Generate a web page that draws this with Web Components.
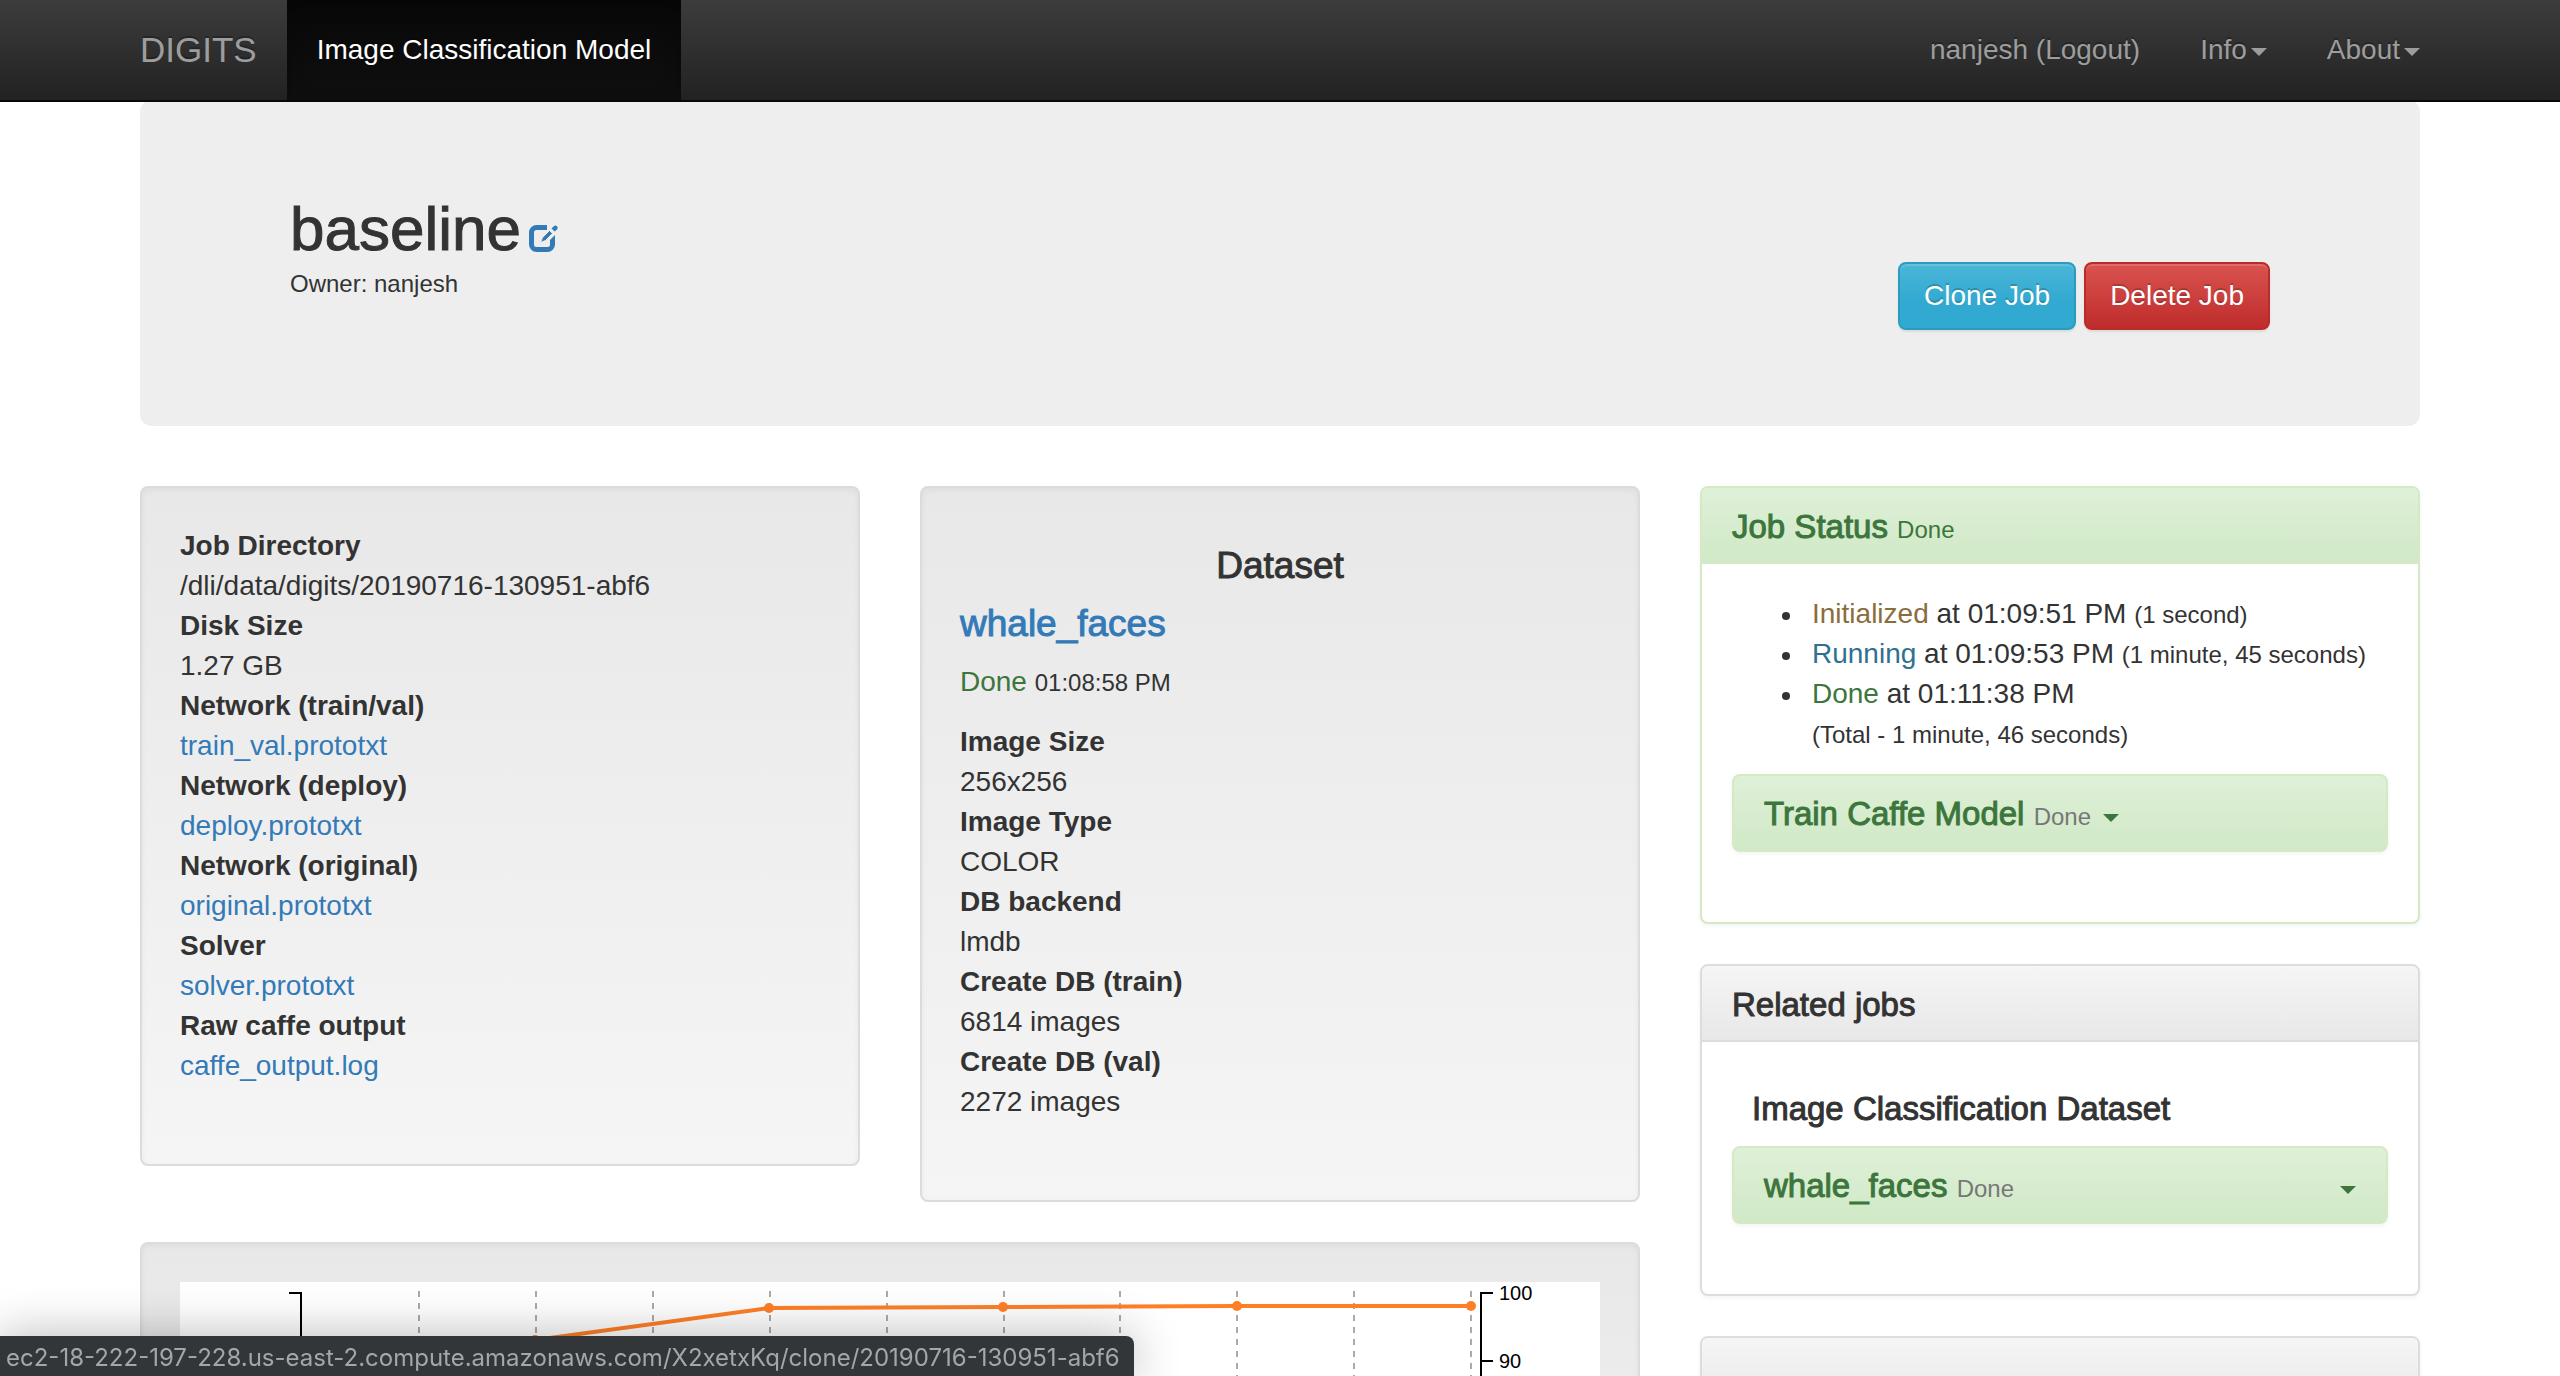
<!DOCTYPE html>
<html lang="en">
<head>
<meta charset="utf-8">
<title>baseline - DIGITS</title>
<style>
  html, body { margin: 0; height: 100%; }
  body {
    font: 28px/40px "Liberation Sans", Arial, sans-serif;
    color: #333; background: #fff; overflow: hidden;
  }
</style>
</head>
<body>
<digits-app></digits-app>
<link-status>ec2-18-222-197-228.us-east-2.compute.amazonaws.com/X2xetxKq/clone/20190716-130951-abf6</link-status>

<script>
const base = `
  *, *::before, *::after { box-sizing: border-box; }
  a { color: #337ab7; text-decoration: none; }
  small { font-size: 24px; font-weight: 400; line-height: 24px; -webkit-text-stroke: 0; }
  h1, h2, h3, h4 { margin: 0; font-weight: 400; -webkit-text-stroke: 1px currentColor; }
  button { font: inherit; color: inherit; margin: 0; cursor: pointer; }
`;

function define(name, css, html) {
  customElements.define(name, class extends HTMLElement {
    constructor() {
      super();
      this.attachShadow({ mode: 'open' }).innerHTML = `<style>${base}${css}</style>${html}`;
    }
  });
}

define('drop-caret', `
  :host { display: inline-block; vertical-align: middle; width: 16px; height: 8px; }
  svg { display: block; }
`, `<svg width="16" height="8" viewBox="0 0 16 8" aria-hidden="true"><path d="M0 0H16L8 8Z" fill="currentColor"/></svg>`);

define('nav-item', `
  :host { display: block; }
  a {
    display: flex; align-items: center; gap: 4px; height: 100px; padding: 0 30px;
    color: #9d9d9d; text-shadow: 0 -2px 0 rgba(0,0,0,.25);
  }
  drop-caret, ::slotted(drop-caret) { margin-top: 4px; }
  :host([active]) a {
    color: #fff; background: linear-gradient(#080808, #0f0f0f);
    box-shadow: inset 0 6px 18px rgba(0,0,0,.25);
  }
`, `<a href="#"><slot></slot></a>`);

define('nav-bar', `
  :host {
    display: block; position: relative; z-index: 2; margin-bottom: -2px;
    background: linear-gradient(#3c3c3c, #222); border-bottom: 2px solid #080808;
  }
  nav { display: flex; align-items: center; padding: 0 110px 0 140px; white-space: nowrap; }
  .brand { padding-right: 30px; font-size: 35px; color: #9d9d9d; text-shadow: 0 -2px 0 rgba(0,0,0,.25); }
  .right { display: flex; margin-left: auto; }
`, `
  <nav>
    <a class="brand" href="#">DIGITS</a>
    <nav-item active>Image Classification Model</nav-item>
    <div class="right">
      <nav-item>nanjesh (Logout)</nav-item>
      <nav-item>Info<drop-caret></drop-caret></nav-item>
      <nav-item>About<drop-caret></drop-caret></nav-item>
    </div>
  </nav>`);

define('action-button', `
  :host { display: block; }
  button {
    display: block; height: 68px; padding: 0 24px; border: 2px solid #2b9cc0; border-radius: 8px;
    color: #fff; text-shadow: 0 -2px 0 rgba(0,0,0,.2);
    background: linear-gradient(#4ab6d8, #31a9d0 60%);
    box-shadow: inset 0 2px 0 rgba(255,255,255,.15), 0 2px 2px rgba(0,0,0,.075);
  }
  :host([danger]) button { background: linear-gradient(#d9534f, #bf2c2c); border-color: #b92c28; }
`, `<button type="button"><slot></slot></button>`);

define('job-header', `
  :host {
    display: flex; align-items: flex-end; justify-content: space-between;
    padding: 96px 150px; background: #eee; border-radius: 12px;
  }
  .title { padding-bottom: 24px; }
  .name { display: flex; align-items: flex-end; gap: 8px; }
  h1 { font-size: 62px; line-height: 66px; }
  .name a { display: block; padding-bottom: 10px; }
  svg { display: block; }
  small { display: block; line-height: 44px; }
  .actions { display: flex; gap: 8px; }
`, `
  <div class="title">
    <div class="name">
      <h1>baseline</h1>
      <a href="#" aria-label="Edit name">
        <svg width="29" height="28" viewBox="0 0 29 28" fill="none">
          <path d="M18 3.500H7.500A5 5 0 0 0 2.500 8.500V20.500A5 5 0 0 0 7.500 25.500H18.500A5 5 0 0 0 23.500 20.500V17" stroke="#337ab7" stroke-width="5"/>
          <path d="M26 11V18H21V16Z" fill="#337ab7"/>
          <path d="M11.500 18.500L13.500 13.500L20.500 6.500L23.500 9.500L16.500 16.500Z" fill="#337ab7" stroke="#eee" stroke-width="1"/>
          <path d="M22.500 4.500L24.500 2.500Q26.300.700 28 2.200Q29.500 4 27.700 5.700L25.700 7.600Z" fill="#337ab7"/>
        </svg>
      </a>
    </div>
    <small>Owner: nanjesh</small>
  </div>
  <div class="actions">
    <action-button>Clone Job</action-button>
    <action-button danger>Delete Job</action-button>
  </div>`);

define('info-well', `
  :host {
    display: block; padding: 38px; border: 2px solid #dcdcdc; border-radius: 8px;
    background: linear-gradient(#e8e8e8, #f5f5f5);
    box-shadow: inset 0 2px 6px rgba(0,0,0,.05), 0 2px 0 rgba(255,255,255,.1);
  }
`, `<slot></slot>`);

/* Definition list built from "term|value" rows; a third field marks the value as a link. */
customElements.define('fact-list', class extends HTMLElement {
  connectedCallback() {
    const rows = this.getAttribute('rows').split(';').map(r => r.split('|'));
    this.attachShadow({ mode: 'open' }).innerHTML = `<style>${base}
      :host { display: block; margin-bottom: 40px; }
      dl, dd { margin: 0; } dt { font-weight: 700; }
    </style><dl>${rows.map(([t, v, link]) =>
      `<dt>${t}</dt><dd>${link ? `<a href="#">${v}</a>` : v}</dd>`).join('')}</dl>`;
  }
});

define('status-panel', `
  :host {
    --edge: #ddd; --from: #f5f5f5; --to: #e8e8e8; --title: #333;
    display: block; border: 2px solid var(--edge); border-radius: 8px; background: #fff;
    box-shadow: 0 2px 4px rgba(0,0,0,.05);
  }
  :host([done]) { --edge: #d6e9c6; --from: #dff0d8; --to: #d0e9c6; --title: #3c763d; }
  header {
    height: 76px; padding: 21px 30px 0; border-bottom: 2px solid var(--edge); border-radius: 6px 6px 0 0;
    background: linear-gradient(var(--from), var(--to));
  }
  h3 { font-size: 33px; line-height: 36px; color: var(--title); }
  .body { padding: 30px 30px 70px; }
`, `<header><h3><slot name="title"></slot></h3></header><div class="body"><slot></slot></div>`);

define('task-bar', `
  :host { display: block; }
  button {
    display: flex; align-items: center; gap: 12px; width: 100%; height: 78px; padding: 2px 30px 0;
    border: 2px solid #d6e9c6; border-radius: 8px; color: #3c763d; text-align: left;
    background: linear-gradient(#dff0d8, #d0e9c6); box-shadow: 0 2px 4px rgba(0,0,0,.05);
    font-size: 33px; line-height: 36px;
  }
  h4 { font-size: inherit; }
  small { color: #777; }
  drop-caret { margin-top: 8px; }
  :host([spread]) button { justify-content: space-between; }
`, `<button type="button"><h4><slot></slot> <small>Done</small></h4><drop-caret></drop-caret></button>`);

const gridX = Array.from({ length: 10 }, (_, i) => 239 + Math.round(i * 116.9));
define('accuracy-chart', `
  :host { display: block; background: #fff; }
  svg { display: block; width: 100%; height: auto; }
  text { font-size: 20px; fill: #000; }
`, `
  <svg viewBox="0 0 1420 400" role="img" aria-label="Training accuracy">
    <g stroke="#aaa" stroke-width="2" stroke-dasharray="6 6">
      ${gridX.map(x => `<path d="M${x} 9V400"/>`).join('')}
    </g>
    <g stroke="#000" stroke-width="2" fill="none">
      <path d="M109 11H121V400"/><path d="M1313 11H1301V400M1301 79H1313M1301 147H1313M1301 215H1313M1301 283H1313M1301 351H1313"/>
    </g>
    <path d="M355 58L589 26L823 25L1057 24L1291 24" fill="none" stroke="#ff7f27" stroke-width="4"/>
    <g fill="#ff7f27">
      <circle cx="355" cy="58" r="5"/><circle cx="589" cy="26" r="5"/><circle cx="823" cy="25" r="5"/>
      <circle cx="1057" cy="24" r="5"/><circle cx="1291" cy="24" r="5"/>
    </g>
    <text x="1319" y="18">100</text><text x="1319" y="86">90</text>
  </svg>`);

define('job-history', `
  :host { display: block; margin-bottom: 20px; }
  ul { margin: 0; padding-left: 80px; white-space: nowrap; list-style: none; }
  li::before {
    content: ""; display: inline-block; width: 8px; height: 8px; border-radius: 50%;
    margin: 0 22px 0 -30px; background: #333; vertical-align: middle;
  }
  .init { color: #8a6d3b; } .run { color: #31708f; } .done { color: #3c763d; }
`, `
  <ul>
    <li><span class="init">Initialized</span> at 01:09:51 PM <small>(1 second)</small></li>
    <li><span class="run">Running</span> at 01:09:53 PM <small>(1 minute, 45 seconds)</small></li>
    <li><span class="done">Done</span> at 01:11:38 PM<br><small>(Total - 1 minute, 46 seconds)</small></li>
  </ul>`);

define('link-status', `
  :host {
    display: block; position: fixed; left: 0; bottom: 0; z-index: 3; height: 40px; padding: 0 14px 0 6px;
    background: #323639; color: #a4a6a8; border-radius: 0 8px 0 0; white-space: nowrap;
    font: 24px/44px Inter, Roboto, sans-serif;
    box-shadow: 0 0 48px rgba(0,0,0,.3);
  }
`, `<slot></slot>`);

define('digits-app', `
  :host { display: block; height: 100%; overflow: hidden; }
  main { padding: 0 140px; }
  .columns { display: grid; grid-template-columns: repeat(3, minmax(0, 1fr)); gap: 60px; margin-top: 60px; }
  .left { grid-column: span 2; display: flex; flex-direction: column; gap: 40px; }
  .wells { display: grid; grid-template-columns: repeat(2, minmax(0, 1fr)); gap: 60px; align-items: start; }
  .side { display: flex; flex-direction: column; gap: 40px; }
  .dataset { display: flex; flex-direction: column; gap: 18px; margin-bottom: 20px; }
  .dataset h4 { font-size: 37px; line-height: 40px; }
  .dataset h4:first-child { text-align: center; margin-top: 20px; }
  .dataset p { margin: 0; }
  .dataset p span { color: #3c763d; }
  .related { font-size: 33px; line-height: 34px; margin: 20px; }
`, `
  <nav-bar></nav-bar>
  <main>
    <job-header></job-header>
    <div class="columns">
      <section class="left">
        <div class="wells">
          <info-well>
            <fact-list rows="Job Directory|/dli/data/digits/20190716-130951-abf6;Disk Size|1.27 GB;Network (train/val)|train_val.prototxt|1;Network (deploy)|deploy.prototxt|1;Network (original)|original.prototxt|1;Solver|solver.prototxt|1;Raw caffe output|caffe_output.log|1"></fact-list>
          </info-well>
          <info-well>
            <div class="dataset">
              <h4>Dataset</h4>
              <h4><a href="#">whale_faces</a></h4>
              <p><span>Done</span> <small>01:08:58 PM</small></p>
            </div>
            <fact-list rows="Image Size|256x256;Image Type|COLOR;DB backend|lmdb;Create DB (train)|6814 images;Create DB (val)|2272 images"></fact-list>
          </info-well>
        </div>
        <info-well><accuracy-chart></accuracy-chart></info-well>
      </section>
      <aside class="side">
        <status-panel done>
          <span slot="title">Job Status <small>Done</small></span>
          <job-history></job-history>
          <task-bar>Train Caffe Model</task-bar>
        </status-panel>
        <status-panel>
          <span slot="title">Related jobs</span>
          <h4 class="related">Image Classification Dataset</h4>
          <task-bar spread>whale_faces</task-bar>
        </status-panel>
        <status-panel></status-panel>
      </aside>
    </div>
  </main>`);
</script>
</body>
</html>
